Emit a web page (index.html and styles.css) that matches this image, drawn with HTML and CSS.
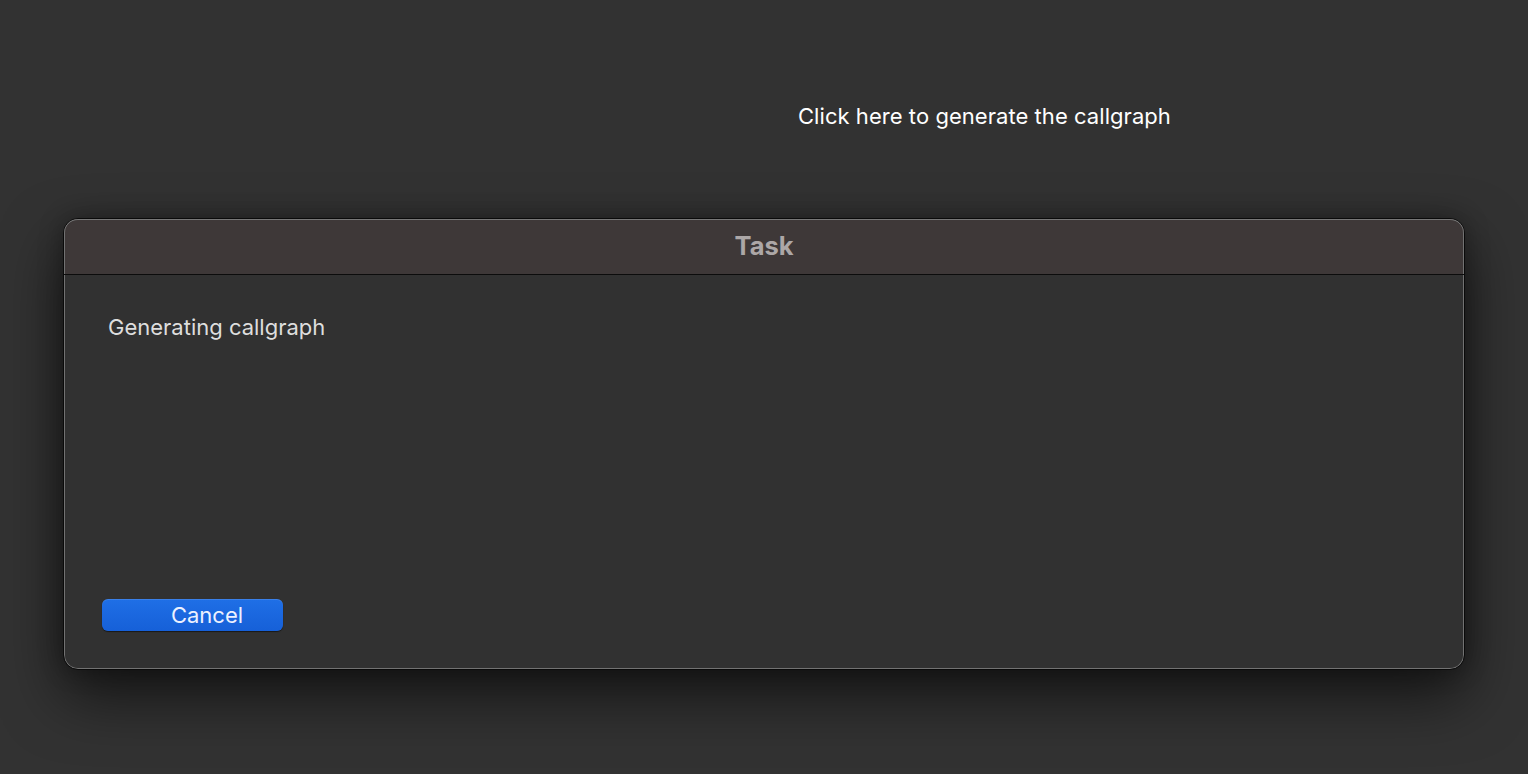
FILE: index.html
```html
<!DOCTYPE html>
<html>
<head>
<meta charset="utf-8">
<link rel="stylesheet" href="styles.css">
</head>
<body>
<div class="page">
  <div class="top-row">
    <span class="hint">Click here to generate the callgraph</span>
  </div>
  <div class="dialog">
    <div class="titlebar">Task</div>
    <div class="content">
      <div class="message">Generating callgraph</div>
      <div class="spacer"></div>
      <button class="cancel">Cancel</button>
    </div>
  </div>
</div>
</body>
</html>
```
FILE: styles.css
```css
html, body {
  margin: 0;
  padding: 0;
  background: #323232;
  height: 100%;
  overflow: hidden;
}
.page {
  display: flex;
  flex-direction: column;
  font-family: Inter, "Helvetica Neue", "Liberation Sans", sans-serif;
  padding: 0 63px;
}
.top-row {
  display: flex;
  padding-top: 104px;
  padding-left: 735px;
  height: 25px;
}
.hint {
  color: #ffffff;
  font-size: 22px;
  line-height: 25px;
  letter-spacing: 0.05px;
}
.dialog {
  margin-top: 89px;
  width: 1402px;
  height: 452px;
  box-sizing: border-box;
  border: 1px solid #0a0a0a;
  border-radius: 15px;
  background: #313131;
  box-shadow: inset 0 0 0 1px #727272, 0 26px 60px rgba(0,0,0,0.6), 0 0 24px rgba(0,0,0,0.3);
  display: flex;
  flex-direction: column;
  overflow: hidden;
}
.titlebar {
  height: 56px;
  flex: none;
  box-sizing: border-box;
  background: #3e3838;
  border-bottom: 1px solid #0c0c0c;
  box-shadow: inset 0 1px 0 #777, inset 1px 0 0 #727272, inset -1px 0 0 #727272;
  border-radius: 14px 14px 0 0;
  display: flex;
  align-items: center;
  justify-content: center;
  color: #aca7a7;
  font-weight: 700;
  font-size: 25.5px;
  padding-bottom: 2px;
}
.content {
  flex: 1;
  display: flex;
  flex-direction: column;
  align-items: flex-start;
  padding: 40px 0 38px 38px;
}
.message {
  color: #dedede;
  font-size: 22px;
  line-height: 25px;
  margin-left: 6px;
}
.spacer {
  flex: 1;
}
.cancel {
  width: 181px;
  height: 32px;
  box-sizing: border-box;
  border: none;
  border-radius: 6px;
  background: linear-gradient(#1f6fe6, #1660d8);
  box-shadow: 0 1px 1px rgba(0,0,0,0.5), inset 0 1px 0 rgba(255,255,255,0.12);
  color: #ecf1ff;
  font-family: Inter, "Helvetica Neue", "Liberation Sans", sans-serif;
  font-size: 22px;
  padding: 0 0 0 29px;
  line-height: 32px;
}
```
